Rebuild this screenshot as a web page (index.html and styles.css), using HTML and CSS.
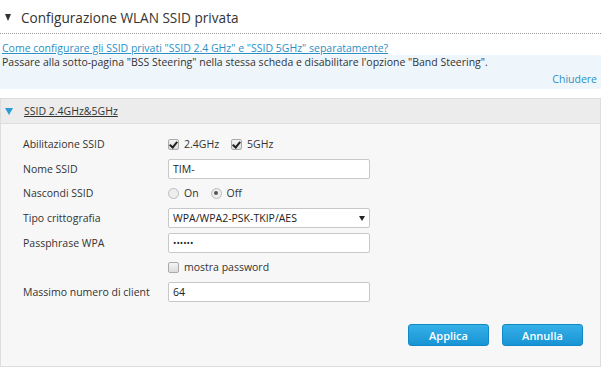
FILE: index.html
```html
<!DOCTYPE html>
<html>
<head>
<meta charset="utf-8">
<link rel="stylesheet" href="styles.css">
</head>
<body>
<div class="page">
  <div class="title"><span class="tri"></span><span class="title-text">Configurazione WLAN SSID privata</span></div>
  <div class="dots"></div>
  <a class="help-link" href="#">Come configurare gli SSID privati "SSID 2.4 GHz" e "SSID 5GHz" separatamente?</a>
  <div class="note">
    <div class="note-text">Passare alla sotto-pagina "BSS Steering" nella stessa scheda e disabilitare l'opzione "Band Steering".</div>
    <div class="note-close">Chiudere</div>
  </div>
  <div class="panel">
    <div class="panel-head"><span class="btri"></span><span class="panel-title">SSID 2.4GHz&amp;5GHz</span></div>
    <div class="panel-body">
      <div class="row">
        <div class="label">Abilitazione SSID</div>
        <div class="field checks">
          <label class="opt"><span class="cb checked"></span>2.4GHz</label>
          <label class="opt"><span class="cb checked"></span>5GHz</label>
        </div>
      </div>
      <div class="row">
        <div class="label">Nome SSID</div>
        <div class="field"><div class="input">TIM-</div></div>
      </div>
      <div class="row">
        <div class="label">Nascondi SSID</div>
        <div class="field checks">
          <label class="opt"><span class="rb"></span>On</label>
          <label class="opt"><span class="rb sel"></span>Off</label>
        </div>
      </div>
      <div class="row">
        <div class="label">Tipo crittografia</div>
        <div class="field"><div class="input select">WPA/WPA2-PSK-TKIP/AES<span class="arrow"></span></div></div>
      </div>
      <div class="row">
        <div class="label">Passphrase WPA</div>
        <div class="field"><div class="input pw">&#8226;&#8226;&#8226;&#8226;&#8226;&#8226;</div></div>
      </div>
      <div class="row">
        <div class="label"></div>
        <div class="field checks"><label class="opt"><span class="cb"></span>mostra password</label></div>
      </div>
      <div class="row">
        <div class="label">Massimo numero di client</div>
        <div class="field"><div class="input">64</div></div>
      </div>
      <div class="buttons">
        <button class="btn">Applica</button>
        <button class="btn">Annulla</button>
      </div>
    </div>
  </div>
</div>
</body>
</html>
```
FILE: styles.css
```css
html, body { margin: 0; padding: 0; background: #fff; }
body { font-family: "Open Sans", "Noto Sans", sans-serif; color: #333; font-size: 10.5px; }
.page { width: 601px; padding-top: 7px; }
.title { display: flex; align-items: center; height: 20px; padding-left: 5px; }
.tri { width: 0; height: 0; border-left: 3.5px solid transparent; border-right: 3.5px solid transparent; border-top: 7px solid #333; margin-right: 10px; }
.title-text { font-size: 13.6px; color: #333; }
.dots { margin-top: 6px; border-top: 1px dotted #999; height: 0; }
.help-link { display: block; margin-top: 7px; padding-left: 2px; color: #2b8fc6; text-decoration: underline; line-height: 14px; }
.note { background: #eef6fb; padding: 0 4px 1px 2px; }
.note-text { line-height: 14px; color: #333; }
.note-close { text-align: right; color: #2b8fc6; line-height: 18px; padding-top: 1px; }
.panel { margin-top: 9px; border: 1px solid #ddd; background: #f7f7f7; }
.panel-head { height: 24px; display: flex; align-items: center; background: #ececec; border-bottom: 1px solid #ddd; }
.btri { width: 0; height: 0; border-left: 4px solid transparent; border-right: 4px solid transparent; border-top: 7px solid #2b9bd3; margin-left: 4px; margin-right: 11px; }
.panel-title { text-decoration: underline; color: #333; }
.panel-body { padding: 8px 0 20px 22px; }
.row { display: flex; align-items: center; height: 24.6px; }
.label { width: 145px; }
.field { width: 202px; }
.checks { display: flex; align-items: center; gap: 12px; }
.opt { display: flex; align-items: center; gap: 5px; }
.cb { width: 9px; height: 9px; border: 1px solid #aaa; border-radius: 2px; background: linear-gradient(#f4f4f4, #dcdcdc); position: relative; }
.cb.checked::after { content: ""; position: absolute; left: 2px; top: 0px; width: 3px; height: 6px; border-right: 2px solid #222; border-bottom: 2px solid #222; transform: rotate(40deg); }
.rb { width: 9px; height: 9px; border: 1px solid #bbb; border-radius: 50%; background: #eee; position: relative; }
.rb.sel::after { content: ""; position: absolute; left: 2.5px; top: 2.5px; width: 4px; height: 4px; border-radius: 50%; background: #555; }
.input { height: 18px; border: 1px solid #c8c8c8; border-radius: 2px; background: #fff; padding: 0 4px; line-height: 18px; color: #222; }
.select { display: flex; justify-content: space-between; align-items: center; }
.arrow { width: 0; height: 0; border-left: 3px solid transparent; border-right: 3px solid transparent; border-top: 5px solid #222; margin-right: 0; }
.pw { font-size: 9px; }
.buttons { display: flex; justify-content: flex-end; gap: 13px; padding-right: 17px; margin-top: 20px; }
.btn { width: 81px; height: 22px; border: 1px solid #1289c7; border-radius: 3px; background: linear-gradient(#36b0e8, #1794d5); color: #fff; font-family: inherit; font-size: 11px; font-weight: 600; padding: 0; }
```
